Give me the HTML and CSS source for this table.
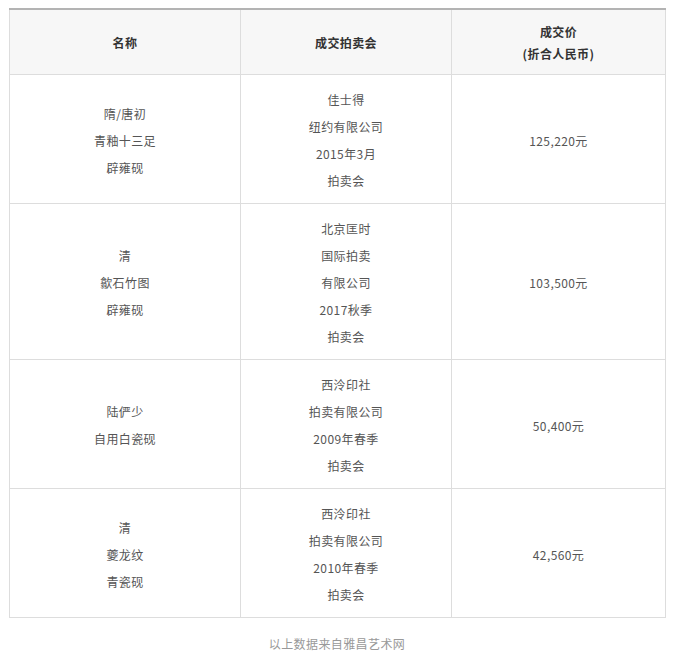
FILE: index.html
```html
<!DOCTYPE html>
<html lang="zh">
<head>
<meta charset="utf-8">
<link rel="stylesheet" href="styles.css">
</head>
<body>
<div class="page">
  <table class="data">
    <colgroup>
      <col class="c1">
      <col class="c2">
      <col class="c3">
    </colgroup>
    <thead>
      <tr>
        <th>名称</th>
        <th>成交拍卖会</th>
        <th>成交价<br>(折合人民币)</th>
      </tr>
    </thead>
    <tbody>
      <tr>
        <td>隋/唐初<br>青釉十三足<br>辟雍砚</td>
        <td>佳士得<br>纽约有限公司<br>2015年3月<br>拍卖会</td>
        <td>125,220元</td>
      </tr>
      <tr>
        <td>清<br>歙石竹图<br>辟雍砚</td>
        <td>北京匡时<br>国际拍卖<br>有限公司<br>2017秋季<br>拍卖会</td>
        <td>103,500元</td>
      </tr>
      <tr>
        <td>陆俨少<br>自用白瓷砚</td>
        <td>西泠印社<br>拍卖有限公司<br>2009年春季<br>拍卖会</td>
        <td>50,400元</td>
      </tr>
      <tr>
        <td>清<br>夔龙纹<br>青瓷砚</td>
        <td>西泠印社<br>拍卖有限公司<br>2010年春季<br>拍卖会</td>
        <td>42,560元</td>
      </tr>
    </tbody>
  </table>
  <p class="source">以上数据来自雅昌艺术网</p>
</div>
</body>
</html>
```

FILE: styles.css
```css
html, body {
  margin: 0;
  padding: 0;
  background: #ffffff;
}
.page {
  padding: 8px 0 0 9px;
  font-family: "Noto Sans CJK SC", "Noto Sans", sans-serif;
  font-size: 12px;
  letter-spacing: 0.4px;
  color: #555555;
}
.data {
  border-collapse: collapse;
  width: 656px;
  table-layout: fixed;
}
.data th,
.data td {
  border: 1px solid #dddddd;
  padding: 11px 4px 9px;
  text-align: center;
  vertical-align: middle;
}
.data th {
  background: #f7f7f7;
  border-top: 2px solid #b3b3b3;
  font-weight: bold;
  color: #333333;
  line-height: 22px;
}
.data td {
  line-height: 27px;
}
.c1 { width: 231px; }
.c2 { width: 211px; }
.c3 { width: 214px; }
.source {
  margin: 16px 0 0 0;
  width: 656px;
  text-align: center;
  line-height: 20px;
  color: #999999;
}
```
